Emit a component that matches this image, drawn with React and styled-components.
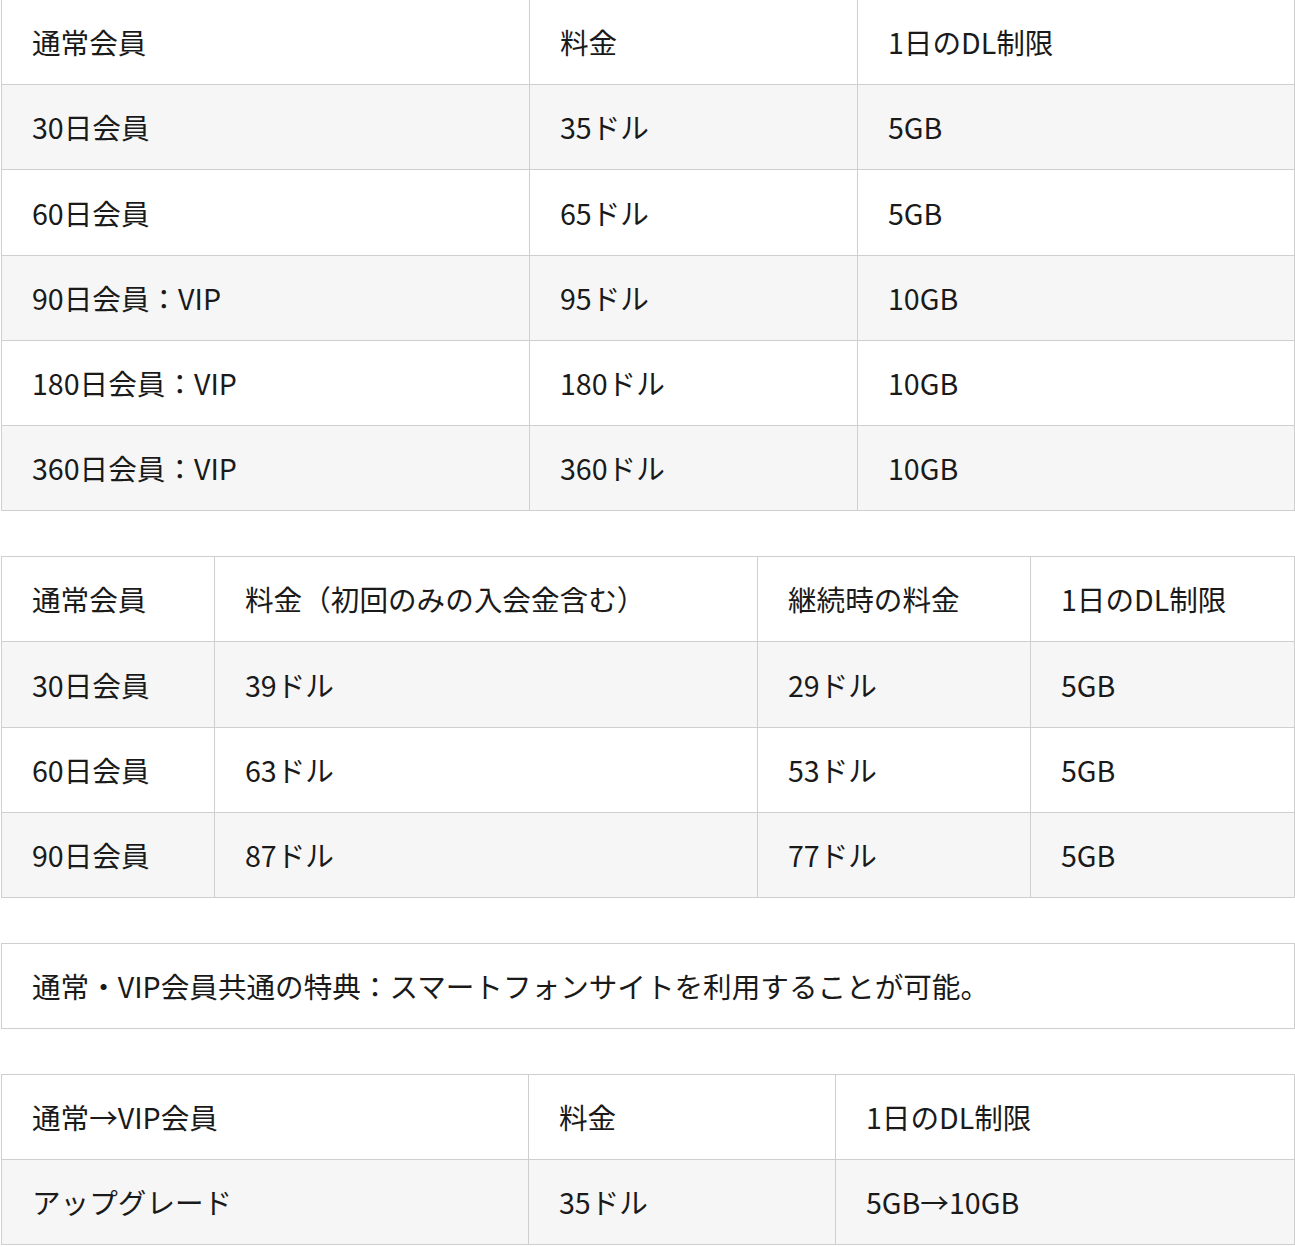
import React from "react";
import styled, { createGlobalStyle } from "styled-components";

const GlobalStyle = createGlobalStyle`
  body {
    margin: 0;
    background: #fff;
    font-family: "Noto Sans CJK JP", "Noto Sans", sans-serif;
    color: #1a1a1a;
  }
`;

const Page = styled.div`
  padding: 0 1px 0 1px;
  display: flex;
  flex-direction: column;
  gap: 45px;
  margin-top: -1px;
`;

const Table = styled.table`
  width: 1293px;
  border-collapse: collapse;
  table-layout: fixed;
  font-size: 28.6px;
  line-height: 42px;
`;

const Row = styled.tr`
  background: ${(p) => (p.$shade ? "#f6f6f6" : "#fff")};
`;

const Cell = styled.td`
  border: 1px solid #cfcfcf;
  padding: 21.2px 30px 21px;
  text-align: left;
  font-weight: 400;
  white-space: nowrap;
`;

const plans = [
  ["30日会員", "35ドル", "5GB"],
  ["60日会員", "65ドル", "5GB"],
  ["90日会員：VIP", "95ドル", "10GB"],
  ["180日会員：VIP", "180ドル", "10GB"],
  ["360日会員：VIP", "360ドル", "10GB"],
];

const firstTime = [
  ["30日会員", "39ドル", "29ドル", "5GB"],
  ["60日会員", "63ドル", "53ドル", "5GB"],
  ["90日会員", "87ドル", "77ドル", "5GB"],
];

const DataTable = ({ widths, rows }) => (
  <Table>
    <colgroup>
      {widths.map((w, i) => (
        <col key={i} style={{ width: w }} />
      ))}
    </colgroup>
    <tbody>
      {rows.map((r, i) => (
        <Row key={i} $shade={i % 2 === 1}>
          {r.map((c, j) => (
            <Cell key={j}>{c}</Cell>
          ))}
        </Row>
      ))}
    </tbody>
  </Table>
);

export default function App() {
  return (
    <>
      <GlobalStyle />
      <Page>
        <DataTable
          widths={[528, 328, 437]}
          rows={[["通常会員", "料金", "1日のDL制限"], ...plans]}
        />
        <DataTable
          widths={[213, 543, 273, 264]}
          rows={[
            ["通常会員", "料金（初回のみの入会金含む）", "継続時の料金", "1日のDL制限"],
            ...firstTime,
          ]}
        />
        <DataTable
          widths={[1293]}
          rows={[["通常・VIP会員共通の特典：スマートフォンサイトを利用することが可能。"]]}
        />
        <DataTable
          widths={[527, 307, 459]}
          rows={[
            ["通常→VIP会員", "料金", "1日のDL制限"],
            ["アップグレード", "35ドル", "5GB→10GB"],
          ]}
        />
      </Page>
    </>
  );
}
